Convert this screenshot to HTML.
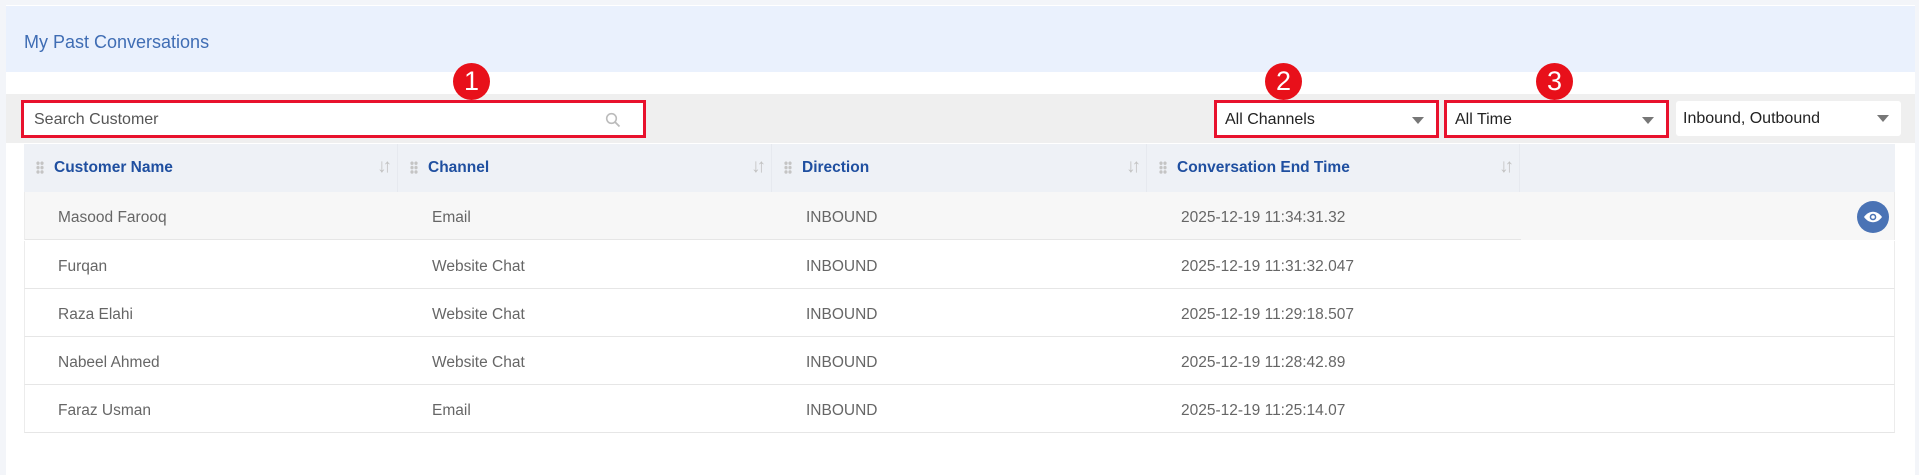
<!DOCTYPE html>
<html><head><meta charset="utf-8"><style>
*{box-sizing:border-box;margin:0;padding:0}
body{width:1919px;height:475px;background:#f3f5f9;font-family:"Liberation Sans",sans-serif;position:relative;overflow:hidden}
.main{position:absolute;left:6px;top:5px;width:1909px;height:470px;background:#fff}
.hdr{position:absolute;left:0;top:1px;width:1909px;height:66px;background:#eaf1fd}
.title{position:absolute;left:18px;top:26px;font-size:18px;color:#3f6db4}
.bar{position:absolute;left:0;top:89px;width:1909px;height:49px;background:#efefef}
.box{position:absolute;background:#fff;font-size:16px;color:#222}
.red{border:3px solid #e8112d}
.badge{position:absolute;width:37px;height:37px;border-radius:50%;background:#e8101a;color:#fff;font-size:27px;text-align:center;line-height:37px}
.caret{position:absolute;right:12px;top:14px;width:0;height:0;border-left:6px solid transparent;border-right:6px solid transparent;border-top:7px solid #777}
.tbl{position:absolute;left:18px;top:139px;width:1871px}
.th{position:absolute;top:0;height:48px;background:#eef1f6;border-right:1px solid #e6e9ef}
.th b{position:absolute;left:30px;top:15px;font-size:15.5px;color:#1f4fa0}
.dots{position:absolute;left:12px;top:17px;width:8px;height:13px;background:radial-gradient(circle,#c4c4c4 1.6px,transparent 1.8px) 0 0/4px 4.4px}
.sort{position:absolute;right:9px;top:12px;font-size:19px;color:#c2c2c2;letter-spacing:-4px}
.row{position:absolute;left:0;width:1871px;height:48px;border-bottom:1px solid #e6e6e6;border-left:1px solid #ececec;border-right:1px solid #ececec}
.row span{position:absolute;top:17px;font-size:15.5px;color:#666}
</style></head><body>
<div class="main">
<div class="hdr"><div class="title">My Past Conversations</div></div>
<div class="bar"></div>
<div class="box red" style="left:15px;top:95px;width:625px;height:38px"><span style="position:absolute;left:10px;top:8px;color:#555">Search Customer</span>
<svg style="position:absolute;right:22px;top:9px" width="16" height="16" viewBox="0 0 16 16"><circle cx="6.5" cy="6.5" r="4.8" fill="none" stroke="#bbb" stroke-width="1.6"/><path d="M10 10l4.5 4.5" stroke="#bbb" stroke-width="1.8"/></svg></div>
<div class="badge" style="left:447px;top:58px">1</div>
<div class="box red" style="left:1208px;top:95px;width:225px;height:38px"><span style="position:absolute;left:8px;top:8px">All Channels</span><div class="caret"></div></div>
<div class="badge" style="left:1259px;top:58px">2</div>
<div class="box red" style="left:1438px;top:95px;width:225px;height:38px"><span style="position:absolute;left:8px;top:8px">All Time</span><div class="caret"></div></div>
<div class="badge" style="left:1530px;top:58px">3</div>
<div class="box" style="left:1670px;top:96px;width:225px;height:35px;border-radius:3px"><span style="position:absolute;left:7px;top:9px">Inbound, Outbound</span><div class="caret" style="top:14px"></div></div>
<div class="tbl">
<div class="th" style="left:0;width:374px"><div class="dots"></div><b>Customer Name</b><span class="sort">↓↑</span></div>
<div class="th" style="left:374px;width:374px"><div class="dots"></div><b>Channel</b><span class="sort">↓↑</span></div>
<div class="th" style="left:748px;width:375px"><div class="dots"></div><b>Direction</b><span class="sort">↓↑</span></div>
<div class="th" style="left:1123px;width:373px"><div class="dots"></div><b>Conversation End Time</b><span class="sort">↓↑</span></div>
<div class="th" style="left:1496px;width:375px;border-right:none"></div>
<div class="row" style="top:48px;background:#f7f7f7;border-bottom:none"><span style="left:33px">Masood Farooq</span><span style="left:407px">Email</span><span style="left:781px">INBOUND</span><span style="left:1156px">2025-12-19 11:34:31.32</span>
<div style="position:absolute;left:0;bottom:0;width:1496px;height:1px;background:#e6e6e6"></div>
<div style="position:absolute;left:1832px;top:9px;width:32px;height:32px;border-radius:50%;background:#4a73b5"><svg width="32" height="32" viewBox="0 0 32 32"><path d="M7 16c5-7 13-7 18 0c-5 7-13 7-18 0z" fill="#fff"/><circle cx="16" cy="16" r="3.3" fill="#4a73b5"/><circle cx="16" cy="16" r="1.8" fill="#fff"/></svg></div></div>
<div class="row" style="top:97px"><span style="left:33px">Furqan</span><span style="left:407px">Website Chat</span><span style="left:781px">INBOUND</span><span style="left:1156px">2025-12-19 11:31:32.047</span></div>
<div class="row" style="top:145px"><span style="left:33px">Raza Elahi</span><span style="left:407px">Website Chat</span><span style="left:781px">INBOUND</span><span style="left:1156px">2025-12-19 11:29:18.507</span></div>
<div class="row" style="top:193px"><span style="left:33px">Nabeel Ahmed</span><span style="left:407px">Website Chat</span><span style="left:781px">INBOUND</span><span style="left:1156px">2025-12-19 11:28:42.89</span></div>
<div class="row" style="top:241px"><span style="left:33px">Faraz Usman</span><span style="left:407px">Email</span><span style="left:781px">INBOUND</span><span style="left:1156px">2025-12-19 11:25:14.07</span></div>
</div>
</div>
</body></html>
